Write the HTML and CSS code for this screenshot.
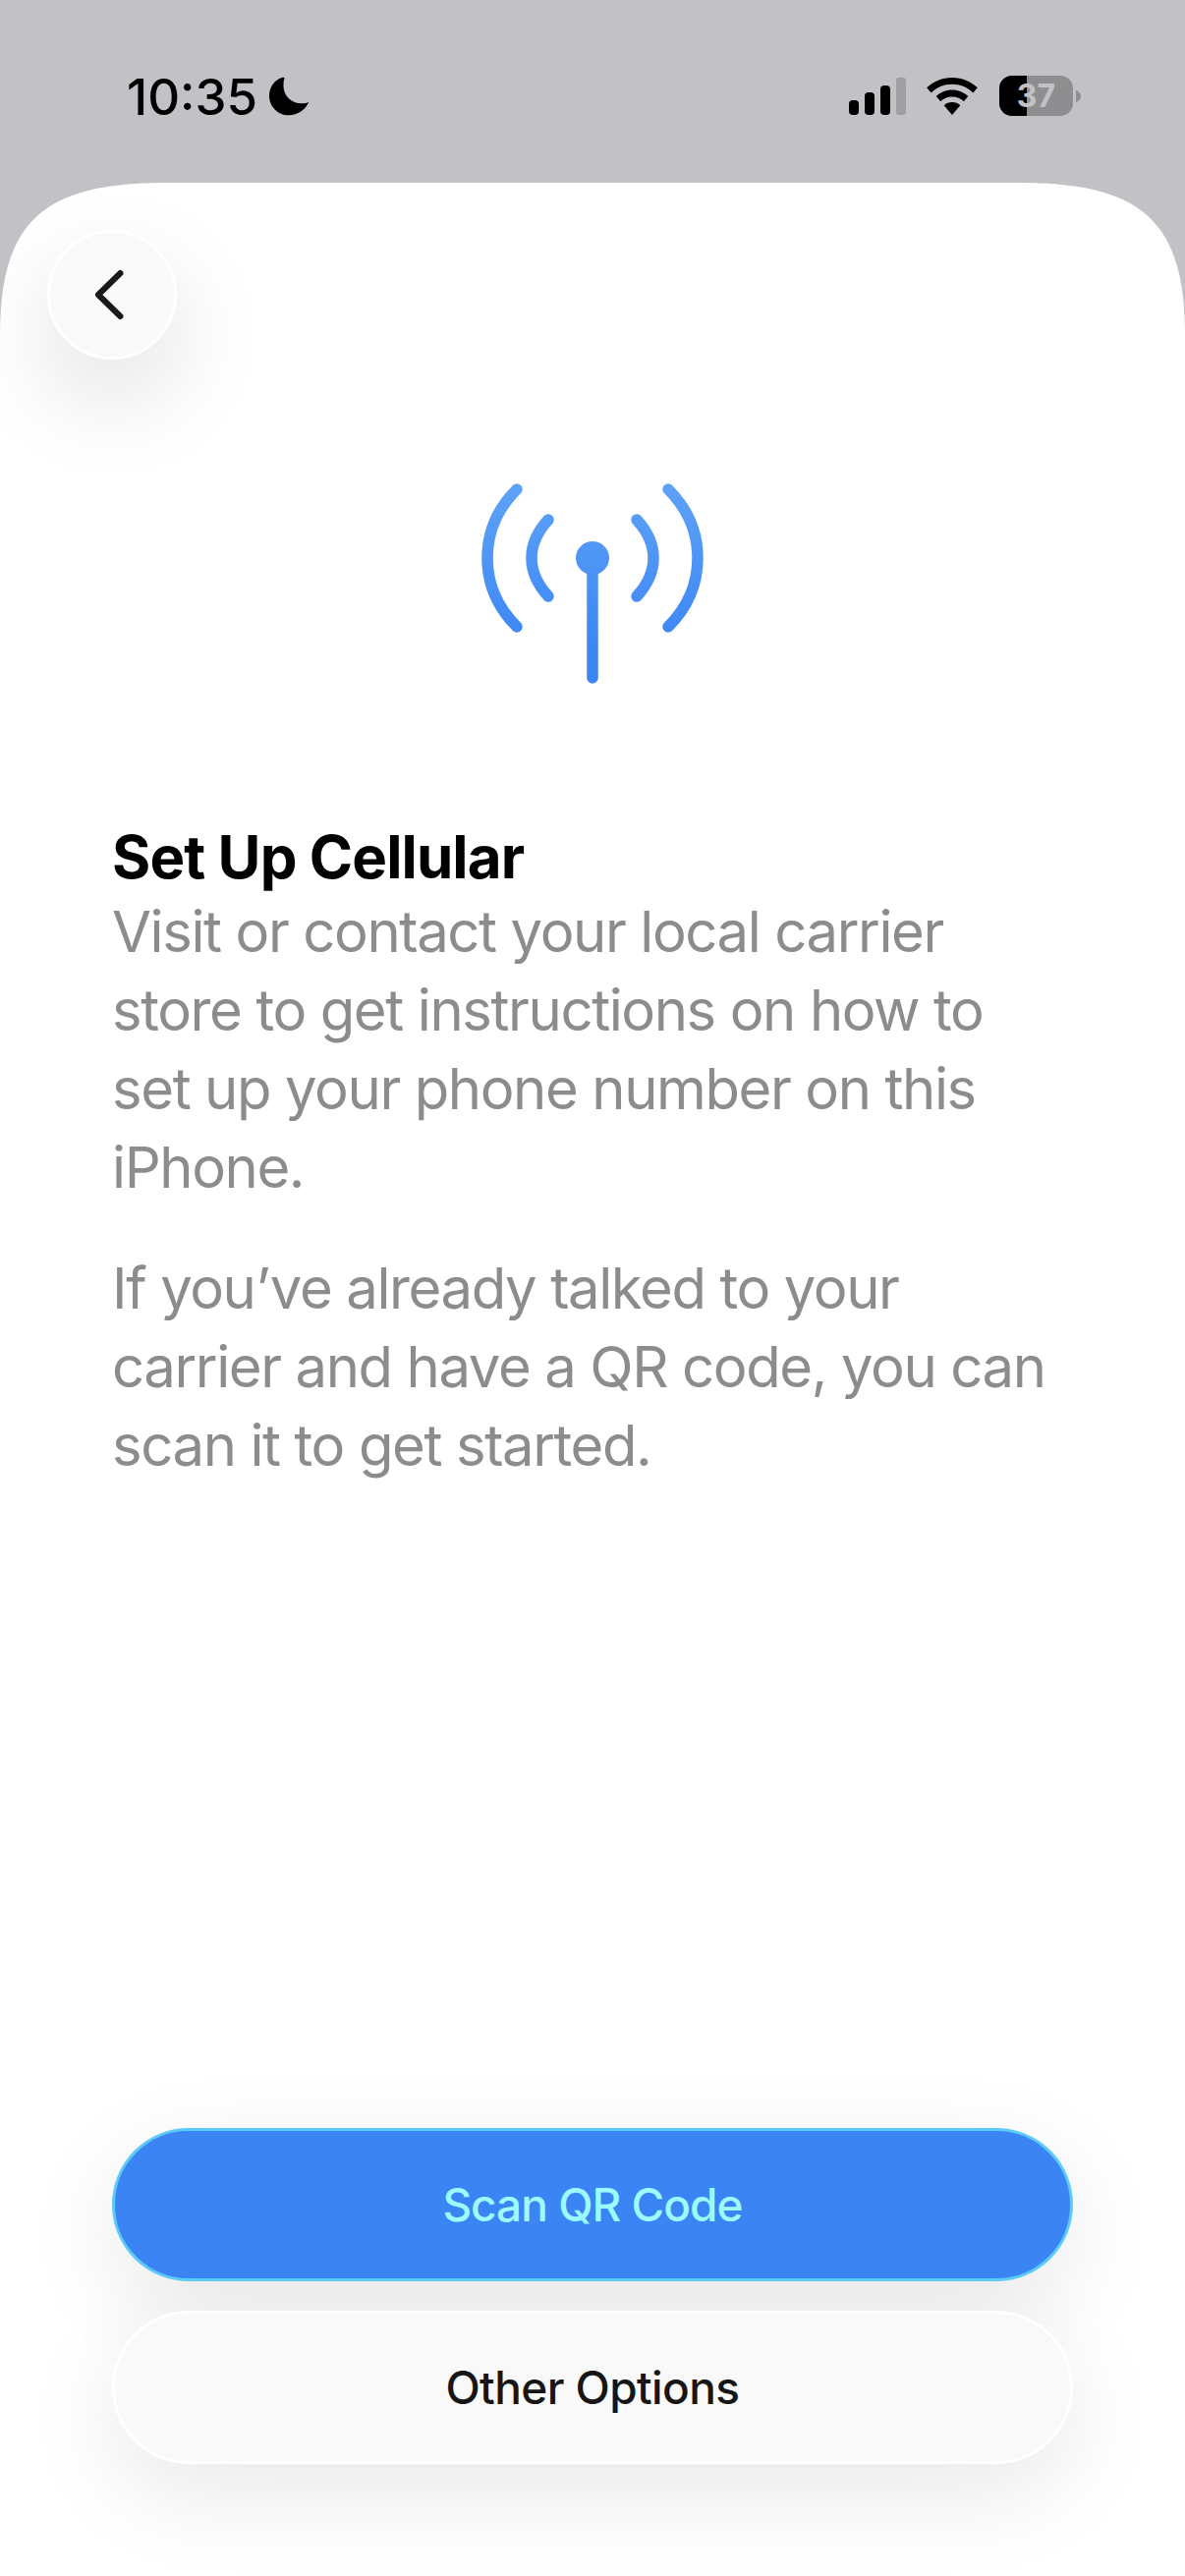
FILE: index.html
```html
<!DOCTYPE html>
<html lang="en">
<head>
<meta charset="utf-8">
<title>Set Up Cellular</title>
<link rel="stylesheet" href="styles.css">
</head>
<body>
<div class="screen">
  <header class="status">
    <div class="status-left">
      <span class="time">10:35</span>
      <svg class="moon" width="42" height="42" viewBox="0 0 42 42"><path d="M13.700.7C5.500 3 0 10.500 0 19.500 0 30.500 8.800 39.300 19.700 39.300c9.300 0 17.300-5.800 20.600-13.600-1.800 1.100-4.300 1.600-7.300 1.600-10.500 0-18.500-7.800-18.500-17.800 0-3 .2-6 1-7.700 0-1-1-1.300-1.800-1.100z" fill="#000"/></svg>
    </div>
    <div class="status-right">
      <svg class="signal" width="58" height="38" viewBox="0 0 58 38">
        <rect x="0" y="23" width="10" height="15" rx="4" fill="#000"/>
        <rect x="16" y="15" width="10" height="23" rx="4" fill="#000"/>
        <rect x="32" y="8" width="10" height="30" rx="4" fill="#000"/>
        <rect x="48" y="0" width="10" height="38" rx="3" fill="#a0a0a3"/>
      </svg>
      <svg class="wifi" width="52" height="38" viewBox="0 0 52 38">
        <path d="M26 0c10 0 19 3.800 25.800 10.300l-4.500 5.200C41.800 10 34.300 6.800 26 6.800S10.200 10 4.700 15.500L.2 10.300C7 3.800 16 0 26 0z" fill="#000"/>
        <path d="M26 12.500c6.300 0 12 2.500 16.300 6.500l-4.500 5.200c-3-2.900-7.100-4.700-11.800-4.700s-8.800 1.800-11.800 4.700L9.700 19c4.300-4 10-6.500 16.300-6.500z" fill="#000"/>
        <path d="M26 25c3.200 0 6.100 1.200 8.300 3.200L26 38l-8.300-9.800c2.200-2 5.100-3.200 8.300-3.200z" fill="#000"/>
      </svg>
      <div class="battery">
        <div class="battery-body">
          <span class="battery-fill"></span>
          <span class="battery-level">37</span>
        </div>
        <svg class="battery-cap" width="5" height="12" viewBox="0 0 7 14" preserveAspectRatio="none"><path d="M0 0c4 1 7 3.500 7 7s-3 6-7 7z" fill="#8e8e90"/></svg>
      </div>
    </div>
  </header>

  <main class="sheet">
    <button class="back" aria-label="Back">
      <svg width="32" height="54" viewBox="0 0 32 54"><path d="M27.500 5 5 27l22.500 22" fill="none" stroke="#1a1a1a" stroke-width="6" stroke-linecap="round" stroke-linejoin="round"/></svg>
    </button>

    <div class="hero">
      <svg width="226" height="204" viewBox="0 0 226 204">
        <defs>
          <linearGradient id="cell" gradientUnits="userSpaceOnUse" x1="0" y1="0" x2="0" y2="204">
            <stop offset="0" stop-color="#5ea2f7"/>
            <stop offset=".85" stop-color="#3b85f5"/>
          </linearGradient>
        </defs>
        <g fill="none" stroke="url(#cell)" stroke-width="11.500" stroke-linecap="round">
          <path d="M36 6C16 26 6 50 6 76s10 50 30 70"/>
          <path d="M190 6c20 20 30 44 30 70s-10 50-30 70"/>
          <path d="M68 37C57 49 51 61 51 76s6 27 17 39"/>
          <path d="M158 37c11 12 17 24 17 39s-6 27-17 39"/>
          <path d="M113 76v122"/>
        </g>
        <circle cx="113" cy="76" r="17" fill="url(#cell)"/>
      </svg>
    </div>

    <section class="copy">
      <h1 class="title">Set Up Cellular</h1>
      <p class="para">Visit or contact your local carrier store to get instructions on how to set up your phone number on this iPhone.</p>
      <p class="para">If you’ve already talked to your carrier and have a QR code, you can scan it to get started.</p>
    </section>

    <div class="actions">
      <button class="btn btn-primary">Scan QR Code</button>
      <button class="btn btn-secondary">Other Options</button>
    </div>
  </main>
</div>
</body>
</html>
```

FILE: styles.css
```css
* { box-sizing: border-box; }
html, body { margin: 0; padding: 0; }
body { width: 1206px; height: 2622px; overflow: hidden; background: #c2c1c6; font-family: Inter, "Liberation Sans", sans-serif; }
.screen { display: flex; flex-direction: column; height: 2622px; }

.status { height: 186px; flex: none; display: flex; justify-content: space-between; padding: 78px 106px 0 129px; }
.status-left { display: flex; align-items: flex-start; gap: 12px; }
.time { font-size: 51px; font-weight: 500; line-height: 42px; height: 42px; color: #000; }
.status-right { display: flex; align-items: flex-start; gap: 21px; padding-top: 1px; }
.battery { display: flex; align-items: center; gap: 3px; margin-top: -2px; margin-left: 1px; }
.battery-body { position: relative; width: 75px; height: 41px; border-radius: 13px; background: #8e8e90; overflow: hidden; display: flex; align-items: center; justify-content: center; }
.battery-fill { position: absolute; left: 0; top: 0; bottom: 0; width: 28px; background: #000; }
.battery-level { position: relative; font-size: 32px; font-weight: 700; color: #c2c1c6; line-height: 41px; }

.sheet { flex: 1; display: flex; flex-direction: column; position: relative; background: #fff; clip-path: path("M0 154C0 34 50 0 170 0L1036 0C1156 0 1206 34 1206 154L1206 2436L0 2436Z"); padding: 48px 114px 114px; }
.back { position: absolute; left: 48px; top: 48px; width: 132px; height: 132px; padding: 0 7px 0 0; border-radius: 50%; border: 3px solid #fff; background: #f9f9f9; box-shadow: 0 40px 100px rgba(0,0,0,.12); display: flex; align-items: center; justify-content: center; }
.hero { display: flex; justify-content: center; margin-top: 258px; }
.copy { margin-top: 140px; }
.title { margin: 0; font-size: 60px; line-height: 72px; font-weight: 700; color: #000; letter-spacing: -0.9px; }
.para { margin: 0 0 43px; font-size: 58px; line-height: 80px; font-weight: 400; color: #8c8c8f; letter-spacing: -1.4px; }
.actions { margin-top: auto; display: flex; flex-direction: column; gap: 30px; }
.btn { height: 156px; width: 978px; border-radius: 78px; font-family: inherit; font-size: 46px; font-weight: 500; padding: 0; }
.btn-primary { background: #3b84f4; border: 3px solid #5ccbf8; color: #9cfaff; letter-spacing: -1px; box-shadow: 0 30px 100px rgba(0,0,0,.09); }
.btn-secondary { background: #f9f9f9; border: 3px solid #fff; color: #161616; letter-spacing: -0.6px; box-shadow: 0 30px 100px rgba(0,0,0,.09); }
```
